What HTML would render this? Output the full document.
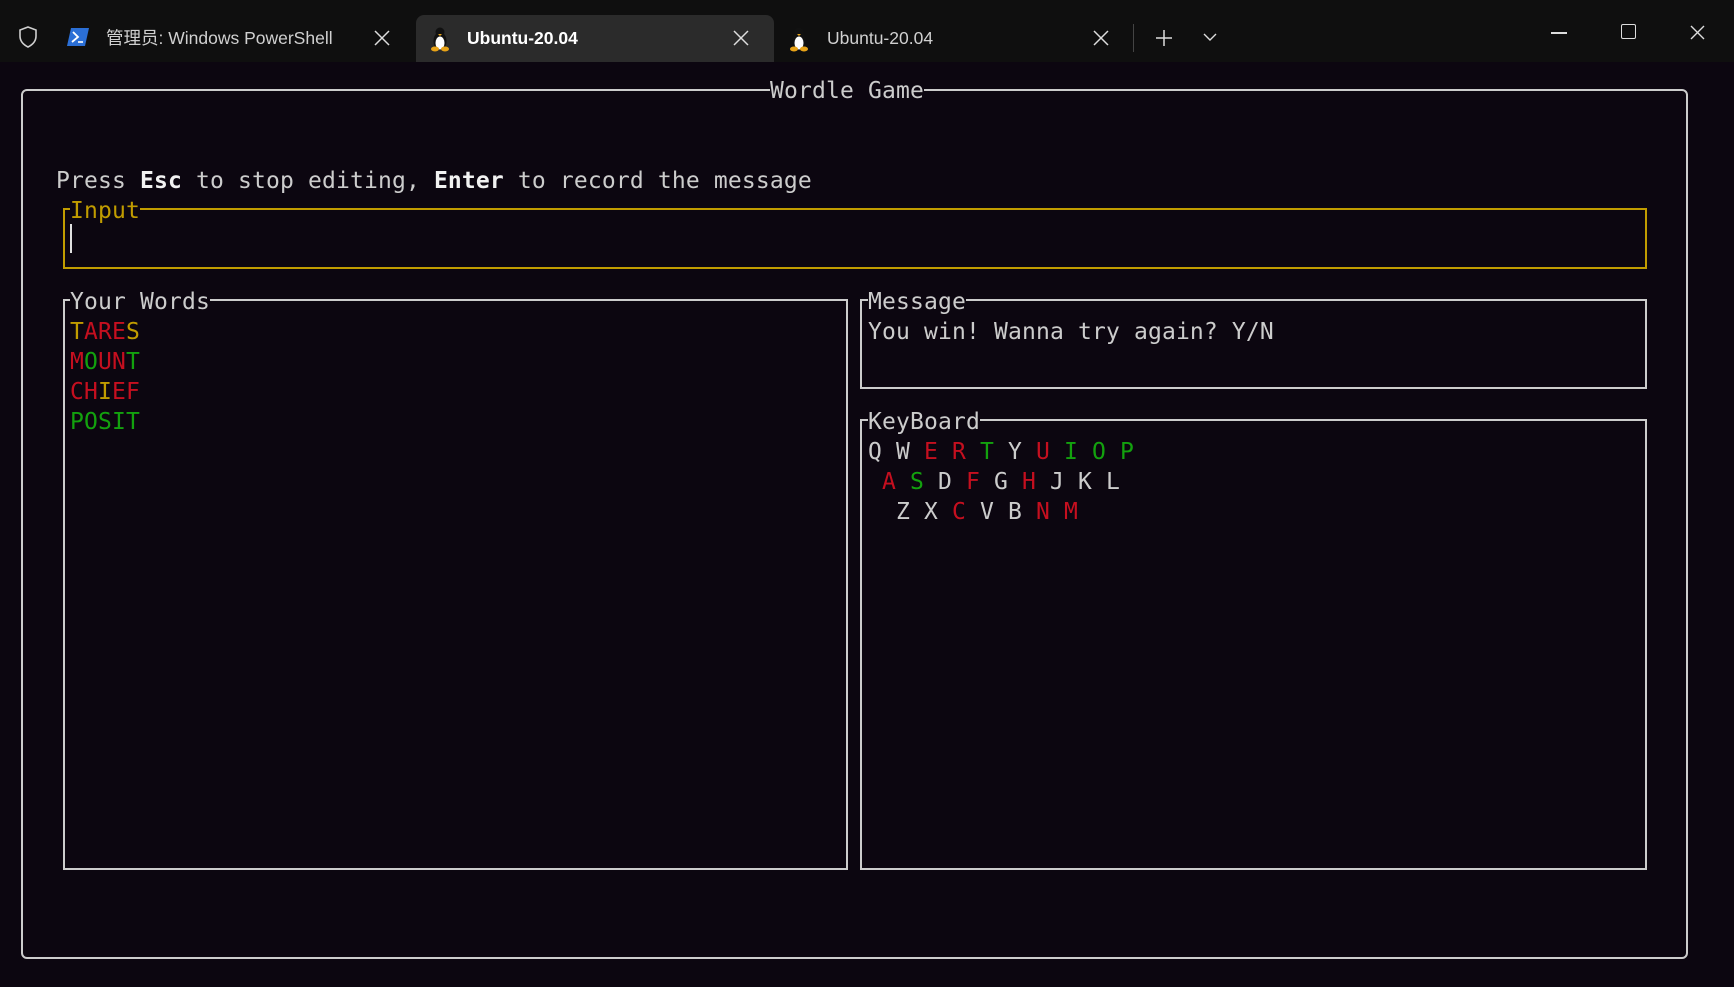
<!DOCTYPE html>
<html><head><meta charset="utf-8"><style>
*{margin:0;padding:0;box-sizing:border-box}
body{width:1734px;height:987px;background:#0c0610;overflow:hidden;position:relative;font-family:"DejaVu Sans Mono","Liberation Mono",monospace;color:#cccccc}
.bar{position:absolute;left:0;top:0;width:1734px;height:62px;background:#0f0f0f}
.tab{position:absolute;top:15px;height:47px;font-family:"Liberation Sans","Noto Sans CJK SC",sans-serif;font-size:17.5px;color:#d0d0d0;line-height:47px;white-space:nowrap}
.t{position:absolute;white-space:pre;font-size:23px;line-height:30px;letter-spacing:0.15px}
.box{position:absolute;border:2px solid #cccccc}
.ttl{background:#0c0610}
.r{color:#c50f1f}.g{color:#13a10e}.y{color:#c19c00}.b{font-weight:bold;color:#f2f2f2}
.cx{position:absolute}
</style></head><body>
<div class="bar"></div>
<div style="position:absolute;left:416px;top:15px;width:358px;height:47px;background:#2b2b2b;border-radius:8px 8px 0 0"></div>
<svg style="position:absolute;left:17px;top:25px" width="22" height="24" viewBox="0 0 22 24"><path d="M11 2 L19 5 V11 C19 17 15 20 11 22 C7 20 3 17 3 11 V5 Z" fill="none" stroke="#cfcfcf" stroke-width="1.6"/></svg>
<svg style="position:absolute;left:67px;top:28px" width="22" height="18" viewBox="0 0 22 18"><path d="M4 0 H22 L18 18 H0 Z" fill="#2b6fd6"/><path d="M6 4 L11 9 L5 14" stroke="#fff" stroke-width="1.8" fill="none"/><path d="M11 14 H16" stroke="#fff" stroke-width="1.6"/></svg>
<div class="tab" style="left:106px">管理员: Windows PowerShell</div>
<svg class="cx" style="left:374px;top:30px" width="16" height="16"><path d="M1 1 L15 15 M15 1 L1 15" stroke="#ddd" stroke-width="1.5"/></svg>
<svg style="position:absolute;left:429px;top:26px" width="22" height="26" viewBox="0 0 22 26"><ellipse cx="11" cy="15" rx="6.5" ry="9" fill="#111"/><ellipse cx="11" cy="17" rx="4.5" ry="6.5" fill="#fff"/><circle cx="11" cy="6" r="4.5" fill="#111"/><path d="M9 8 L11 10 L13 8Z" fill="#e8a317"/><ellipse cx="6" cy="23" rx="4" ry="2.5" fill="#e8a317"/><ellipse cx="16" cy="23" rx="4" ry="2.5" fill="#e8a317"/></svg>
<div class="tab" style="left:467px;color:#fff;font-weight:bold">Ubuntu-20.04</div>
<svg class="cx" style="left:733px;top:30px" width="16" height="16"><path d="M1 1 L15 15 M15 1 L1 15" stroke="#ddd" stroke-width="1.5"/></svg>
<svg style="position:absolute;left:788px;top:26px" width="22" height="26" viewBox="0 0 22 26"><ellipse cx="11" cy="15" rx="6.5" ry="9" fill="#111"/><ellipse cx="11" cy="17" rx="4.5" ry="6.5" fill="#fff"/><circle cx="11" cy="6" r="4.5" fill="#111"/><path d="M9 8 L11 10 L13 8Z" fill="#e8a317"/><ellipse cx="6" cy="23" rx="4" ry="2.5" fill="#e8a317"/><ellipse cx="16" cy="23" rx="4" ry="2.5" fill="#e8a317"/></svg>
<div class="tab" style="left:827px">Ubuntu-20.04</div>
<svg class="cx" style="left:1093px;top:30px" width="16" height="16"><path d="M1 1 L15 15 M15 1 L1 15" stroke="#ddd" stroke-width="1.5"/></svg>
<div style="position:absolute;left:1133px;top:24px;width:1px;height:28px;background:#444"></div>
<svg class="cx" style="left:1156px;top:30px" width="16" height="16"><path d="M8 0 V16 M0 8 H16" stroke="#ddd" stroke-width="1.5"/></svg>
<svg style="position:absolute;left:1203px;top:32px" width="14" height="10"><path d="M1 2 L7 8 L13 2" stroke="#ddd" stroke-width="1.4" fill="none"/></svg>
<div style="position:absolute;left:1551px;top:32px;width:16px;height:1.5px;background:#ddd"></div>
<div style="position:absolute;left:1621px;top:24px;width:15px;height:15px;border:1.5px solid #ddd;border-radius:2px"></div>
<svg class="cx" style="left:1690px;top:25px" width="15" height="15"><path d="M1 1 L14 14 M14 1 L1 14" stroke="#ddd" stroke-width="1.4"/></svg>

<div class="box" style="left:21px;top:89px;width:1667px;height:870px;border-radius:6px"></div>
<div class="t ttl" style="left:770px;top:76px">Wordle Game</div>
<div class="t" style="left:56px;top:166px">Press <span class="b">Esc</span> to stop editing, <span class="b">Enter</span> to record the message</div>

<div class="box" style="left:63px;top:208px;width:1584px;height:61px;border-color:#c19c00"></div>
<div class="t ttl y" style="left:70px;top:196px">Input</div>
<div style="position:absolute;left:70px;top:224px;width:2px;height:29px;background:#e0e0e0"></div>

<div class="box" style="left:63px;top:299px;width:785px;height:571px"></div>
<div class="t ttl" style="left:70px;top:287px">Your Words</div>
<div class="t" style="left:70px;top:317px"><span class="y">T</span><span class="r">ARE</span><span class="y">S</span></div>
<div class="t" style="left:70px;top:347px"><span class="r">M</span><span class="g">O</span><span class="r">UN</span><span class="g">T</span></div>
<div class="t" style="left:70px;top:377px"><span class="r">CH</span><span class="y">I</span><span class="r">EF</span></div>
<div class="t g" style="left:70px;top:407px">POSIT</div>

<div class="box" style="left:860px;top:299px;width:787px;height:90px"></div>
<div class="t ttl" style="left:868px;top:287px">Message</div>
<div class="t" style="left:868px;top:317px">You win! Wanna try again? Y/N</div>

<div class="box" style="left:860px;top:419px;width:787px;height:451px"></div>
<div class="t ttl" style="left:868px;top:407px">KeyBoard</div>
<div class="t" style="left:868px;top:437px">Q W <span class="r">E</span> <span class="r">R</span> <span class="g">T</span> Y <span class="r">U</span> <span class="g">I</span> <span class="g">O</span> <span class="g">P</span></div>
<div class="t" style="left:868px;top:467px"> <span class="r">A</span> <span class="g">S</span> D <span class="r">F</span> G <span class="r">H</span> J K L</div>
<div class="t" style="left:868px;top:497px">  Z X <span class="r">C</span> V B <span class="r">N</span> <span class="r">M</span></div>
</body></html>
